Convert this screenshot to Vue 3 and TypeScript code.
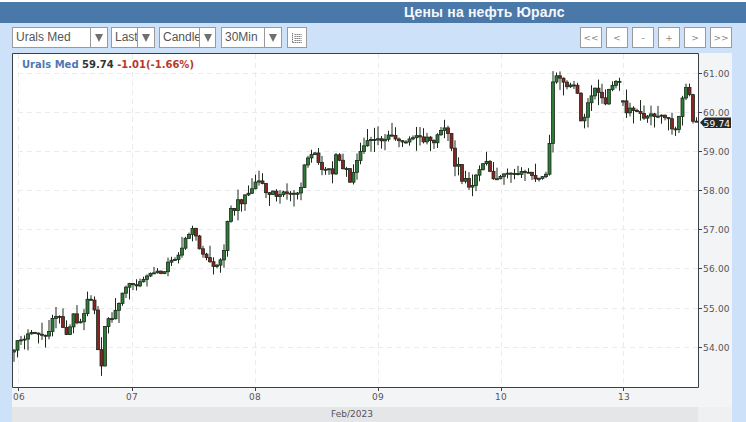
<script setup lang="ts">
const way: [number, number][] = [
  [13,352],[16,351],[18,336],[22,340],[28,335],[35,333],[40,334],[45,338],[50,330],[53,315],[58,316],[62,320],[64,336],[68,335],[72,318],[75,312],[78,330],[82,318],[85,312],[88,297],[91,300],[94,306],[96,325],[98,349],[102,367],[104,327],[108,320],[112,318],[115,312],[118,305],[122,293],[125,290],[128,286],[132,283],[138,286],[142,280],[150,273],[165,272],[168,262],[175,258],[180,255],[184,240],[190,232],[193,228],[197,240],[200,250],[208,260],[215,270],[219,262],[223,258],[227,223],[230,207],[234,212],[237,200],[242,203],[245,195],[253,188],[256,180],[261,180],[265,190],[268,197],[273,190],[277,198],[282,193],[293,193],[300,192],[302,180],[305,162],[310,157],[315,153],[318,163],[322,168],[330,170],[332,177],[335,157],[338,153],[342,170],[347,167],[350,183],[355,167],[358,155],[362,148],[367,140],[372,138],[378,139],[385,140],[388,135],[395,137],[400,142],[408,141],[412,137],[420,137],[425,145],[428,132],[433,147],[438,132],[447,127],[450,143],[455,165],[460,163],[462,180],[468,178],[471,207],[473,180],[477,175],[480,168],[487,160],[492,178],[498,178],[505,172],[520,173],[530,172],[535,180],[542,178],[548,172],[550,135],[553,83],[556,75],[563,78],[565,97],[568,83],[575,87],[578,95],[580,120],[586,118],[588,103],[595,88],[600,95],[605,105],[610,87],[621,79],
]
const way2: [number, number][] = [
  [623,102],[625,118],[628,107],[635,110],[641,115],[645,118],[651,115],[668,117],[670,128],[678,128],[680,107],[682.5,98],[686,86],[689.5,96],[693,122],[698,122],
]

function interp(w: [number, number][], x: number): number {
  for (let i = 1; i < w.length; i++) {
    if (x <= w[i][0]) {
      const [a, b] = w[i - 1]
      const [c, d] = w[i]
      return b + ((d - b) * (x - a)) / (c - a)
    }
  }
  return w[w.length - 1][1]
}

let seed = 17
function rnd(): number {
  seed = (seed * 16807) % 2147483647
  return seed / 2147483647
}

interface Candle { x: number; top: number; h: number; hi: number; lo: number; up: boolean }

function build(w: [number, number][], x0: number, x1: number): Candle[] {
  const out: Candle[] = []
  let prev = w[0][1]
  for (let x = x0; x <= x1; x += 3.5) {
    const c = interp(w, x) + (rnd() - 0.5) * 3
    const top = Math.min(prev, c)
    const bot = Math.max(prev, c)
    const r1 = rnd()
    const r2 = rnd()
    out.push({
      x,
      top,
      h: Math.max(bot - top, 1),
      hi: top - r1 * r1 * 12 - 0.5,
      lo: bot + r2 * r2 * 13 + 0.5,
      up: c <= prev,
    })
    prev = c
  }
  return out
}

const candles: Candle[] = [...build(way, 14, 621), ...build(way2, 623, 697)]

const gridX = [18, 132, 255, 378, 501, 623]
const prices = [
  { y: 73, t: '61.00' }, { y: 112, t: '60.00' }, { y: 151, t: '59.00' }, { y: 190, t: '58.00' },
  { y: 229, t: '57.00' }, { y: 268, t: '56.00' }, { y: 308, t: '55.00' }, { y: 347, t: '54.00' },
]
const dates = [
  { x: 19, t: '06' }, { x: 132, t: '07' }, { x: 255, t: '08' }, { x: 378, t: '09' }, { x: 501, t: '10' }, { x: 624, t: '13' },
]
const selects = [
  { label: 'Urals Med', w: 96, a: 17 },
  { label: 'Last', w: 44, a: 17 },
  { label: 'Candle', w: 57, a: 16 },
  { label: '30Min', w: 61, a: 17 },
]
const navs = ['<<', '<', '-', '+', '>', '>>']
</script>

<template>
  <div class="page">
    <header class="title">Цены на нефть Юралс</header>
    <div class="toolbar">
      <div class="left">
        <div v-for="s in selects" :key="s.label" class="select" :style="{ width: s.w + 'px' }">
          <span class="sel-label">{{ s.label }}</span>
          <span class="sel-arrow" :style="{ width: s.a + 'px' }"><i class="tri"></i></span>
        </div>
        <button class="tbtn list-btn" type="button" aria-label="list">
          <svg width="12" height="12" viewBox="0 0 12 12">
            <path d="M1.5 1v10M1.5 10.5H11M3.5 2.5h7M3.5 4.5h7M3.5 6.5h7M3.5 8.5h7" fill="none" stroke="#777" stroke-width="1" stroke-dasharray="1.4 .6" />
          </svg>
        </button>
      </div>
      <div class="right">
        <button v-for="n in navs" :key="n" class="tbtn nav" type="button">{{ n }}</button>
      </div>
    </div>
    <div class="panel">
      <svg class="chart" width="720" height="354" viewBox="12 53 720 354">
        <rect x="13" y="54" width="685" height="333" fill="#fff" />
        <g stroke="#ebebeb" stroke-width="1" stroke-dasharray="5 4">
          <line v-for="x in gridX" :key="'gx' + x" :x1="x + 0.5" :x2="x + 0.5" y1="54" y2="387" />
          <line v-for="p in prices" :key="'gy' + p.y" x1="18" x2="698" :y1="p.y + 0.5" :y2="p.y + 0.5" />
        </g>
        <g v-for="c in candles" :key="c.x">
          <line :x1="c.x" :x2="c.x" :y1="c.hi" :y2="c.lo" stroke="#1c2a1c" stroke-width="1" />
          <rect
            :x="c.x - 1.5"
            :y="c.top"
            width="3"
            :height="c.h"
            :fill="c.up ? '#2e7a36' : '#8a2424'"
            stroke="#1d2a1d"
            stroke-width="0.8"
          />
        </g>
        <path d="M12.5 53.5H698.5V387.5H12.5Z" fill="none" stroke="#3c4046" stroke-width="1" />
        <g stroke="#3c4046" stroke-width="1">
          <line v-for="p in prices" :key="'tk' + p.y" x1="698" x2="702" :y1="p.y + 0.5" :y2="p.y + 0.5" />
          <line v-for="d in gridX" :key="'td' + d" :x1="d + 0.5" :x2="d + 0.5" y1="387" y2="391" />
        </g>
        <text v-for="p in prices" :key="'pt' + p.y" class="axis" x="703" :y="p.y + 4">{{ p.t }}</text>
        <text v-for="d in dates" :key="d.t" class="axis" :x="d.x" y="400" text-anchor="middle">{{ d.t }}</text>
        <path d="M700 122.5L705 117.5H731V128H705Z" fill="#26282a" />
        <text class="tag" x="703.5" y="126.5">59.74</text>
        <text class="legend" x="22" y="68"><tspan fill="#4f77b4">Urals Med</tspan><tspan fill="#333"> 59.74 </tspan><tspan fill="#b73a2a">-1.01(-1.66%)</tspan></text>
      </svg>
      <div class="month">Feb/2023</div>
    </div>
  </div>
</template>

<style scoped>
.page {
  width: 746px;
  height: 422px;
  padding-top: 2px;
  box-sizing: border-box;
  background: linear-gradient(#fff 2px, #cde1f9 2px);
  display: flex;
  flex-direction: column;
  overflow: hidden;
  font-family: "Liberation Sans", Arial, sans-serif;
}
.title {
  height: 21px;
  flex: none;
  background: #4a78a8;
  color: #f4f8fc;
  font-weight: 700;
  font-size: 14px;
  letter-spacing: 0.16px;
  line-height: 20px;
  padding-left: 404px;
}
.toolbar {
  height: 21px;
  flex: none;
  margin: 4px 14px 5px 12px;
  display: flex;
  justify-content: space-between;
}
.left {
  display: flex;
  gap: 4px;
}
.right {
  display: flex;
  gap: 4px;
}
.select {
  display: flex;
  box-sizing: border-box;
  height: 21px;
  background: #fff;
  border: 1px solid #9a9a9a;
}
.select:nth-child(2) {
  margin-left: -1px;
}
.select:nth-child(4) {
  margin-left: 1px;
}
.sel-label {
  flex: 1;
  min-width: 0;
  overflow: hidden;
  white-space: nowrap;
  font-size: 12px;
  line-height: 19px;
  color: #555;
  padding-left: 3px;
}
.sel-arrow {
  flex: none;
  box-sizing: border-box;
  border-left: 1px solid #9a9a9a;
  display: flex;
  align-items: center;
  justify-content: center;
}
.tri {
  width: 0;
  height: 0;
  border-left: 4px solid transparent;
  border-right: 4px solid transparent;
  border-top: 8px solid #707070;
}
.tbtn {
  box-sizing: border-box;
  height: 21px;
  background: #fff;
  border: 1px solid #9a9a9a;
  padding: 0;
  margin: 0;
  display: flex;
  align-items: center;
  justify-content: center;
}
.list-btn {
  width: 20px;
  margin-left: 1px;
}
.nav {
  width: 22px;
  color: #888;
  font-family: "DejaVu Sans", sans-serif;
  font-size: 9px;
}
.panel {
  width: 720px;
  margin-left: 12px;
  flex: 1;
  display: flex;
  flex-direction: column;
  background: #f3f4f6;
}
.chart {
  display: block;
  flex: none;
}
.axis {
  font-family: "DejaVu Sans", sans-serif;
  font-size: 9px;
  letter-spacing: 0.2px;
  fill: #555;
}
.tag {
  font-family: "DejaVu Sans", sans-serif;
  font-size: 9px;
  letter-spacing: 0.2px;
  fill: #fff;
}
.legend {
  font-family: "DejaVu Sans", sans-serif;
  font-size: 10px;
  font-weight: 700;
}
.month {
  flex: 1;
  background: linear-gradient(90deg, #e5e6e8 686px, #eef0f2 686px);
  text-align: center;
  font-family: "DejaVu Sans", sans-serif;
  font-size: 9px;
  line-height: 14px;
  color: #555;
  padding-right: 40px;
  box-sizing: border-box;
}
</style>
